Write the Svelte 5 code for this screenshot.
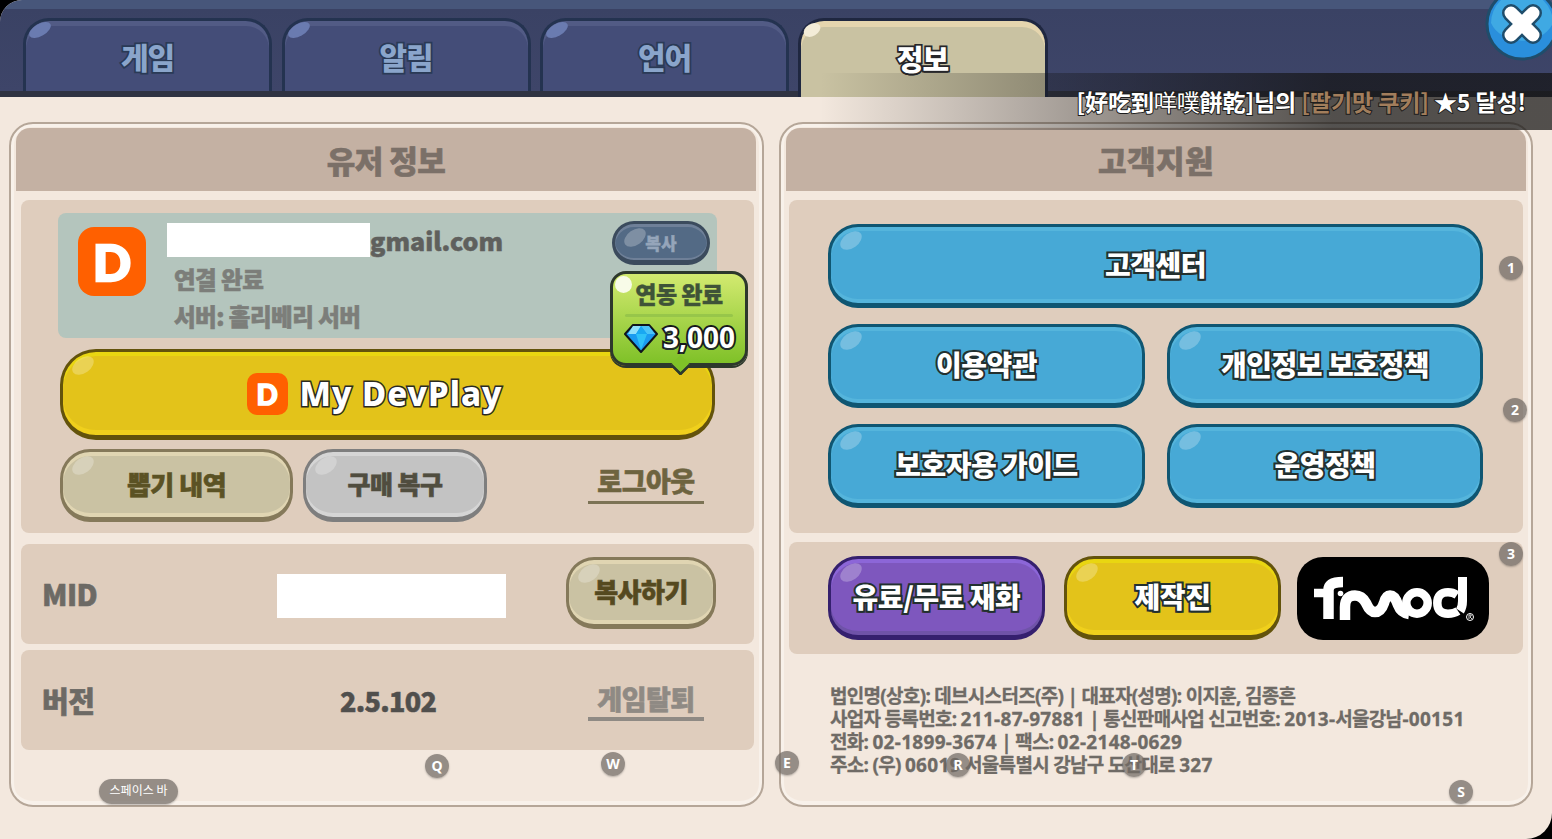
<script>
  const tabs = [
    { label: '게임' },
    { label: '알림' },
    { label: '언어' },
    { label: '정보', active: true }
  ];
  const hints = [
    { k: '1', x: 1511, y: 268 }, { k: '2', x: 1515, y: 410 }, { k: '3', x: 1511, y: 554 },
    { k: 'Q', x: 437, y: 766 }, { k: 'W', x: 613, y: 764 }, { k: 'E', x: 787, y: 763 },
    { k: 'R', x: 958, y: 765 }, { k: 'T', x: 1134, y: 765 }, { k: 'S', x: 1461, y: 792 }
  ];
  const footer = [
    '법인명(상호): 데브시스터즈(주) | 대표자(성명): 이지훈, 김종흔',
    '사업자 등록번호: 211-87-97881 | 통신판매사업 신고번호: 2013-서울강남-00151',
    '전화: 02-1899-3674 | 팩스: 02-2148-0629',
    '주소: (우) 06019 서울특별시 강남구 도산대로 327'
  ].map((l) => l.split(/([\d-]+)/));
</script>

<div class="app">
  <header class="top">
    <nav class="tabs">
      {#each tabs as t}
        <div class="tab" class:active={t.active}><span class="gloss"></span><span class="tab-label">{t.label}</span></div>
      {/each}
    </nav>
  </header>

  <main class="main">
    <section class="panel">
      <h2 class="title">유저 정보</h2>
      <div class="box left-a box-user">
        <div class="card">
          <div class="logo"><span>D</span></div>
          <div class="who">
            <div class="mail"><span class="mask"></span><span>gmail.com</span></div>
            <div class="sub s1">연결 완료</div>
            <div class="sub s2">서버: 홀리베리 서버</div>
          </div>
          <div class="btn slate"><span class="shine"></span>복사</div>
        </div>
        <div class="btn yellow dev"><span class="shine"></span><span class="logo small"><span>D</span></span><span class="out devtext">My DevPlay</span></div>
        <div class="row">
          <div class="btn sand draw"><span class="shine"></span>뽑기 내역</div>
          <div class="btn grey restore"><span class="shine"></span>구매 복구</div>
          <div class="link logout">로그아웃</div>
        </div>
        <div class="tip">
          <span class="tip-dot"></span>
          <div class="tip-title">연동 완료</div>
          <div class="tip-line"></div>
          <div class="tip-reward">
            <svg width="34" height="30" viewBox="0 0 34 30">
              <path d="M9 2H25L33 11L17 29L1 11Z" fill="#1b9bf0" stroke="#10151c" stroke-width="2" stroke-linejoin="round"/>
              <path d="M9 3L4 11H12L17 3Z" fill="#8fe0fb"/>
              <path d="M12 11H23L17 27Z" fill="#2fc2f8"/>
              <path d="M17 3L23 11H31L25 3Z" fill="#4cc4f7"/>
              <path d="M12 11L17 3L23 11Z" fill="#19a8f2"/>
            </svg>
            <span class="out reward">3,000</span>
          </div>
          <span class="tail"></span>
        </div>
      </div>
      <div class="box left-a line mid">
        <span class="line-key">MID</span>
        <span class="mid-mask"></span>
        <div class="btn sand copy"><span class="shine"></span>복사하기</div>
      </div>
      <div class="box left-a line ver">
        <span class="line-key">버전</span>
        <span class="ver-num">2.5.102</span>
        <div class="link quit">게임탈퇴</div>
      </div>
    </section>

    <section class="panel right">
      <h2 class="title">고객지원</h2>
      <div class="box right-a links">
        <div class="btn blue wide"><span class="shine"></span><span class="out">고객센터</span></div>
        <div class="btn blue"><span class="shine"></span><span class="out">이용약관</span></div>
        <div class="btn blue"><span class="shine"></span><span class="out">개인정보 보호정책</span></div>
        <div class="btn blue"><span class="shine"></span><span class="out">보호자용 가이드</span></div>
        <div class="btn blue"><span class="shine"></span><span class="out">운영정책</span></div>
      </div>
      <div class="box right-a extras">
        <div class="btn purple"><span class="shine"></span><span class="out">유료/무료 재화</span></div>
        <div class="btn yellow credit"><span class="shine"></span><span class="out">제작진</span></div>
        <div class="fmod">
          <svg width="192" height="83" viewBox="0 0 192 83" fill="none" stroke="#fff" stroke-width="10.500">
            <path d="M31.500 62V33Q31.500 25 46 25"/>
            <path d="M17 36H33" stroke-width="8.500"/>
            <circle cx="43.500" cy="36.500" r="2.800" fill="#fff" stroke="none"/>
            <path d="M48 63V50Q48 38.500 58 38.500Q65 38.500 69 46Q73 55 78 55Q84 55 87 46Q89 38.500 93 38.500Q98 38.500 101 48Q104 56 112 57"/>
            <circle cx="120" cy="46" r="10.700" stroke-width="8.500"/>
            <path d="M161 54Q157 56.700 151 56.700Q140.300 56.700 140.300 46Q140.300 35.300 151 35.300Q156 35.300 160 38" stroke-width="8.500"/>
            <path d="M165.500 20V44Q165.500 50 163 54" stroke-width="9"/>
            <circle cx="173" cy="60" r="3.500" stroke-width="1"/>
            <path d="M172 62V58H174Q175 59 173 60L175 62" stroke-width="0.800"/>
          </svg>
        </div>
      </div>
      <div class="legal">
        {#each footer as parts}<p>{#each parts as p, i}<span class:num={i % 2 === 1}>{p}</span>{/each}</p>{/each}
      </div>
    </section>
  </main>

  <div class="ticker"><span class="ticker-text">[好吃到<span class="thin">咩噗</span>餅乾]님의 <span class="item">[딸기맛 쿠키]</span> ★5 달성!</span></div>

  <div class="close">
    <svg width="74" height="74" viewBox="0 0 74 74">
      <circle cx="37" cy="37" r="35" fill="#2a8fdc" stroke="#1f4d6b" stroke-width="3"/>
      <path d="M6 36A31 31 0 0 1 68 36A33 27 0 0 1 6 36Z" fill="#3fa9e3"/>
      <path d="M26 26L48 48M48 26L26 48" stroke="#1f4d6b" stroke-width="18" stroke-linecap="round"/>
      <path d="M26 26L48 48M48 26L26 48" stroke="#fff" stroke-width="13" stroke-linecap="round"/>
    </svg>
  </div>

  {#each hints as h}
    <span class="hint" style="left:{h.x - 12}px;top:{h.y - 12}px">{h.k}</span>
  {/each}
  <span class="hint space">스페이스 바</span>
</div>

<style>
  :global(body) { margin: 0; background: #000; }
  .app {
    position: relative;
    width: 1552px;
    height: 839px;
    overflow: hidden;
    background: #f3e8de;
    border-radius: 22px 0 26px 0;
    font-family: "Noto Sans CJK KR", "Noto Sans", sans-serif;
    font-weight: 900;
  }
  .top {
    height: 91px;
    box-sizing: content-box;
    background: linear-gradient(#47567a 0 9px, #3a4264 9px, #3e4569);
    border-bottom: 6px solid #2f3342;
    position: relative;
  }
  .tabs { display: flex; gap: 9.500px; padding: 18px 0 0 23px; }
  .tab {
    position: relative;
    width: 249px;
    height: 73px;
    box-sizing: border-box;
    border: 3px solid #243350;
    border-bottom: 0;
    border-radius: 26px 26px 0 0;
    background: #444d78;
    box-shadow: inset 0 5px 0 #525b85;
    display: flex;
    justify-content: center;
    padding-top: 15px;
    font-size: 30px;
    line-height: 40px;
    letter-spacing: -1px;
    color: #8aa5cb;
    -webkit-text-stroke: 3.500px #2a3a56;
    paint-order: stroke fill;
  }
  .tab-label { paint-order: stroke fill; }
  .gloss {
    position: absolute;
    left: 2px;
    top: 3px;
    width: 24px;
    height: 12px;
    border-radius: 50%;
    background: #6a7bb0;
    transform: rotate(-30deg);
  }
  .tab.active {
    width: 250px;
    margin-left: -1px;
    height: 79px;
    padding-top: 17px;
    background: #c9c2a2;
    border-color: #1f2740;
    box-shadow: inset 0 6px 0 #e5d5ae;
    color: #fff;
    font-size: 29px;
    -webkit-text-stroke: 3.500px #26262a;
    text-shadow: 0 2px 0 #26262a;
  }
  .tab.active .gloss { background: #f3ecd8; width: 18px; height: 12px; }

  .main { display: flex; gap: 15px; padding: 25px 0 0 9px; }
  .panel {
    width: 755px;
    height: 685px;
    box-sizing: border-box;
    border: 2px solid #b5a698;
    border-radius: 24px;
    padding: 4px 6px 0 5px;
    box-shadow: inset 0 -4px 0 #f8f1ea, inset 3px 0 0 #f8f1ea, inset -3px 0 0 #f8f1ea, inset 0 3px 0 #f8f1ea;
    position: relative;
  }
  .panel.right { width: 754px; padding-right: 5px; }
  .title {
    margin: 0;
    height: 63px;
    background: #c4b1a3;
    border-radius: 14px 14px 0 0;
    color: #7b7068;
    font-size: 31px;
    font-weight: 900;
    line-height: 64px;
    letter-spacing: -0.5px;
    text-align: center;
    -webkit-text-stroke: 0.600px currentColor;
  }
  .right .title { letter-spacing: 0.500px; }
  .box { background: #dfcdbd; border-radius: 8px; position: relative; }
  .left-a { margin-left: 5px; width: 733px; }
  .right-a { margin-left: 3px; width: 734px; }
  .box-user { margin-top: 9px; height: 333px; padding: 13px 37px 0; box-sizing: border-box; }

  .card {
    height: 125px;
    background: #b4c5bd;
    border-radius: 8px;
    display: flex;
    position: relative;
    padding: 14px 7px 0 20px;
    box-sizing: border-box;
  }
  .logo {
    width: 68px;
    height: 69px;
    flex: none;
    background: #ff6000;
    border-radius: 16px;
    color: #fff;
    display: flex;
    align-items: center;
    justify-content: center;
    font-family: "Lato", sans-serif;
    font-weight: 900;
    font-size: 50px;
    line-height: 1;
    -webkit-text-stroke: 2.500px #fff;
  }
  .logo.small { width: 41px; height: 42px; border-radius: 10px; font-size: 28px; -webkit-text-stroke: 1.500px #fff; }
  .who { flex: 1; padding-left: 21px; margin-top: -4px; }
  .mail { display: flex; align-items: flex-end; font-size: 25px; line-height: 34px; color: #5f605d; height: 34px; -webkit-text-stroke: 0.500px currentColor; }
  .mask { width: 203px; height: 34px; background: #fff; }
  .sub { color: #7c7e7a; font-size: 23.500px; line-height: 30px; padding-left: 7px; letter-spacing: -0.5px; -webkit-text-stroke: 0.600px currentColor; }
  .s1 { margin-top: 7px; }
  .s2 { margin-top: 7px; }

  .btn {
    position: relative;
    box-sizing: border-box;
    display: flex;
    align-items: center;
    justify-content: center;
    border-style: solid;
    border-width: 3px 3px 5px;
    border-radius: 28px;
    flex: none;
    padding-bottom: 3px;
  }
  .shine {
    position: absolute;
    left: 8px;
    top: 6px;
    width: 24px;
    height: 15px;
    border-radius: 50%;
    transform: rotate(-35deg);
    background: rgba(255, 255, 255, 0.25);
  }
  .out {
    color: #fff;
    -webkit-text-stroke: 4px #23302f;
    paint-order: stroke fill;
    text-shadow: 0 2px 0 #23302f;
    letter-spacing: -0.5px;
  }
  .slate {
    width: 98px; height: 44px; margin-top: -6px;
    background: #536a85; border-color: #3b4b5d;
    box-shadow: inset 0 3px 0 #6f8098, inset 0 -2px 0 #6f8098;
    color: #95a5ba; font-size: 17px; border-radius: 22px; padding-bottom: 0;
    -webkit-text-stroke: 0.400px currentColor;
  }
  .yellow {
    background: #e3c31a;
    border-color: #63530c;
    box-shadow: inset 0 4px 0 #e9d611, inset 0 -5px 0 #f0d01c;
  }
  .dev {
    width: 655px; height: 91px; margin: 11px 0 0 2px; gap: 12px; border-radius: 36px;
    padding: 0 26px 0 0;
  }
  .devtext { font-size: 33px; font-family: "Noto Sans", sans-serif; font-weight: 800; letter-spacing: 1px; -webkit-text-stroke: 3px #2a2a22; text-shadow: 0 1px 0 #2a2a22; }
  .row { display: flex; align-items: center; margin: 9px 0 0 2px; gap: 10px; }
  .sand {
    background: #cac2a3; border-color: #85795a;
    box-shadow: inset 0 4px 0 #e0d5b2, inset 0 -4px 0 #e0d5b2;
    color: #5b5224; font-size: 26px; letter-spacing: -0.5px;
    -webkit-text-stroke: 0.600px currentColor;
  }
  .grey {
    background: #c3c3c3; border-color: #7e7e7e;
    box-shadow: inset 0 4px 0 #d5d5d5, inset 0 -4px 0 #d5d5d5;
    color: #504d3f; font-size: 25px; letter-spacing: -0.5px;
    -webkit-text-stroke: 0.600px currentColor;
  }
  .draw { width: 233px; height: 73px; border-radius: 30px; }
  .restore { width: 184px; height: 73px; border-radius: 30px; }
  .link {
    width: 116px;
    text-align: center;
    font-size: 27px;
    letter-spacing: -0.5px;
    line-height: 36px;
    -webkit-text-stroke: 0.600px currentColor;
  }
  .logout { margin: -4px 13px 0 auto; color: #6e6440; border-bottom: 3px solid #7c7355; padding-bottom: 2px; }

  .tip {
    position: absolute;
    left: 589px;
    top: 71px;
    width: 138px;
    height: 95px;
    box-sizing: border-box;
    border: 3px solid #2d382c;
    border-radius: 16px;
    background: linear-gradient(#d3ea70, #7fc128);
    padding-top: 3px;
    box-shadow: 0 2px 0 #2d382c;
    z-index: 2;
  }
  .tip-dot { position: absolute; left: 2px; top: 2px; width: 17px; height: 17px; border-radius: 50%; background: #f8fbe8; }
  .tip-title { text-align: center; color: #3f5338; font-size: 23px; line-height: 32px; letter-spacing: -0.5px; -webkit-text-stroke: 0.400px currentColor; }
  .tip-line { height: 3px; margin: 5px 12px 0; background: #97c64a; border-radius: 2px; }
  .tip-reward { display: flex; align-items: center; gap: 5px; padding: 3px 0 0 11px; height: 36px; }
  .reward { font-size: 28px; line-height: 30px; font-family: "Noto Sans", sans-serif; font-weight: 700; margin-top: -3px; -webkit-text-stroke: 4px #16181a; letter-spacing: 0; }
  .tail {
    position: absolute;
    left: 60px;
    bottom: -10px;
    width: 12px;
    height: 12px;
    background: #7fc128;
    border: solid #2d382c;
    border-width: 0 3px 3px 0;
    transform: rotate(45deg);
    border-radius: 0 0 3px 0;
  }

  .line { height: 100px; display: flex; align-items: center; box-sizing: border-box; padding-left: 21px; }
  .mid { margin-top: 11px; }
  .ver { margin-top: 6px; }
  .line-key { width: 235px; flex: none; color: #6d6a65; font-size: 29px; letter-spacing: -0.5px; -webkit-text-stroke: 0.600px currentColor; }
  .mid .line-key { margin-top: -2px; }
  .mid-mask { width: 229px; height: 44px; margin-top: 4px; background: #fff; flex: none; }
  .copy { width: 150px; height: 72px; margin: -2px 0 0 60px; color: #55491f; border-radius: 28px; }
  .ver-num { width: 311px; flex: none; padding-left: 63px; box-sizing: border-box; color: #504f4d; font-size: 27px; letter-spacing: -0.7px; -webkit-text-stroke: 0.500px currentColor; }
  .quit { margin-top: 2px; color: #8f8a84; border-bottom: 4px solid #8f8a84; width: 116px; flex: none; }

  .links {
    margin-top: 9px;
    height: 333px;
    box-sizing: border-box;
    padding: 24px 40px 0 39px;
    display: grid;
    grid-template-columns: 317px 316px;
    grid-auto-rows: 84px;
    gap: 16px 22px;
  }
  .blue {
    background: #47a9d6;
    border-color: #0f5672;
    box-shadow: inset 0 4px 0 #55b5dc, inset 0 -4px 0 #55b5dc;
    font-size: 28px;
    border-radius: 30px;
  }
  .wide { grid-column: 1 / 3; }
  .extras {
    margin-top: 9px;
    height: 112px;
    box-sizing: border-box;
    padding: 14px 0 0 39px;
    display: flex;
    align-items: flex-start;
  }
  .purple {
    width: 217px; height: 84px; font-size: 28px; border-radius: 30px;
    background: #7e57be; border-color: #35206e;
    box-shadow: inset 0 4px 0 #8c66d8, inset 0 -4px 0 #6f53a8;
  }
  .credit { width: 217px; height: 84px; margin-left: 19px; font-size: 28px; border-radius: 30px; padding-bottom: 3px; }
  .fmod { width: 192px; height: 83px; margin: 1px 0 0 16px; background: #000; border-radius: 26px; overflow: hidden; flex: none; }
  .fmod svg { display: block; }

  .legal { padding: 31px 0 0 44px; color: #6f6b66; font-family: "Noto Sans", "Noto Sans CJK KR", sans-serif; font-size: 19px; line-height: 23px; font-weight: 700; letter-spacing: -0.7px; -webkit-text-stroke: 0.300px currentColor; }
  .legal p { margin: 0; white-space: nowrap; }
  .num { letter-spacing: 0.300px; }

  .ticker {
    position: absolute;
    left: 820px;
    top: 73px;
    width: 732px;
    height: 57px;
    background: linear-gradient(90deg, rgba(20, 20, 20, 0), rgba(20, 20, 20, 0.72) 70%);
    display: flex;
    justify-content: flex-end;
    padding: 10px 26px 0 0;
    box-sizing: border-box;
    pointer-events: none;
  }
  .ticker-text {
    font-family: "Noto Sans CJK KR", "Noto Sans CJK SC", sans-serif;
    font-size: 23px;
    font-weight: 700;
    line-height: 36px;
    color: #fff;
    white-space: nowrap;
    letter-spacing: -0.1px;
    -webkit-text-stroke: 2px #1d1d1d;
    paint-order: stroke fill;
  }
  .thin { font-weight: 400; }
  .item { color: #a27e5c; }

  .close { position: absolute; left: 1485px; top: -13px; width: 74px; height: 74px; }

  .hint {
    position: absolute;
    width: 24px;
    height: 24px;
    border-radius: 50%;
    background: rgba(112, 106, 100, 0.72);
    box-shadow: 0 1px 2px rgba(0, 0, 0, 0.25);
    color: #fff;
    font-family: "Noto Sans", sans-serif;
    font-size: 14px;
    font-weight: 700;
    line-height: 24px;
    text-align: center;
  }
  .space {
    left: 99px;
    top: 779px;
    width: 79px;
    height: 25px;
    border-radius: 13px;
    font-family: "Noto Sans CJK KR", sans-serif;
    font-size: 12px;
    font-weight: 400;
    line-height: 22px;
  }
</style>
